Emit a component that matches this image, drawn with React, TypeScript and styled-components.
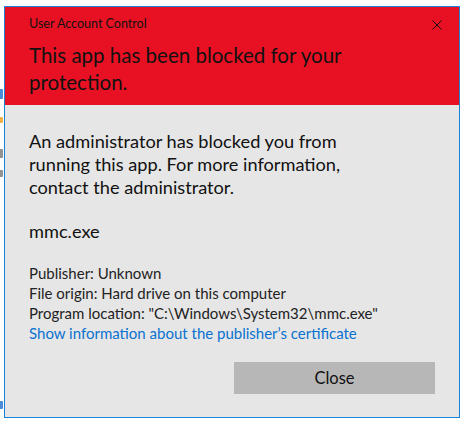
import styled, { createGlobalStyle } from 'styled-components';

const GlobalStyle = createGlobalStyle`
  html, body {
    margin: 0;
    padding: 0;
    background: #ffffff;
  }
  body {
    font-family: Lato, "Noto Sans", "Liberation Sans", sans-serif;
  }
`;

const Page = styled.div`
  display: flex;
  width: 464px;
  height: 426px;
  padding-top: 6px;
  box-sizing: border-box;
  overflow: hidden;
`;

// slivers of the window that sits behind the dialog
const Gutter = styled.div`
  width: 4px;
  flex-shrink: 0;
  display: flex;
  flex-direction: column;
`;

const Sliver = styled.div<{ $top: number; $color: string; $h: number }>`
  margin-top: ${p => p.$top}px;
  width: 3px;
  height: ${p => p.$h}px;
  background: ${p => p.$color};
  border-radius: 0 1px 1px 0;
  opacity: 0.8;
`;

const Dialog = styled.div`
  width: 456px;
  height: 412px;
  box-sizing: border-box;
  border: 1px solid #1883d7;
  background: #e6e6e6;
  display: flex;
  flex-direction: column;
`;

const Header = styled.div`
  background: #e81123;
  height: 98px;
  box-sizing: border-box;
  padding: 9px 24px 0 24px;
  color: #111111;
`;

const TopRow = styled.div`
  display: flex;
  justify-content: space-between;
  align-items: center;
`;

const Caption = styled.div`
  font-size: 12.5px;
  line-height: 16px;
`;

const CloseX = styled.svg`
  width: 10px;
  height: 10px;
  margin-right: -7px;
  margin-top: 2px;
`;

const Title = styled.div`
  margin-top: 10px;
  font-size: 20.5px;
  line-height: 27px;
`;

const Body = styled.div`
  flex: 1;
  display: flex;
  flex-direction: column;
  padding: 25px 24px 0 24px;
  color: #111111;
`;

const Message = styled.div`
  font-size: 18.2px;
  line-height: 23px;
`;

const FileName = styled.div`
  margin-top: 21px;
  font-size: 18.2px;
  line-height: 23px;
`;

const Details = styled.div`
  margin-top: 20px;
  font-size: 15px;
  line-height: 20px;
  color: #222222;
`;

const Link = styled.a`
  display: block;
  color: #0a72d1;
  text-decoration: none;
  cursor: pointer;
`;

const Footer = styled.div`
  display: flex;
  justify-content: flex-end;
  margin-top: 19px;
`;

const Button = styled.button`
  width: 201px;
  height: 32px;
  border: none;
  background: #b7b7b7;
  color: #111111;
  font-family: inherit;
  font-size: 16.5px;
  cursor: pointer;
`;

export default function App() {
  return (
    <>
      <GlobalStyle />
      <Page>
        <Gutter>
          <Sliver $top={83} $color="#1b6fd0" $h={10} />
          <Sliver $top={18} $color="#f59c1a" $h={6} />
          <Sliver $top={26} $color="#777777" $h={9} />
          <Sliver $top={12} $color="#777777" $h={7} />
          <Sliver $top={224} $color="#1b6fd0" $h={8} />
        </Gutter>
        <Dialog>
          <Header>
            <TopRow>
              <Caption>User Account Control</Caption>
              <CloseX viewBox="0 0 10 10">
                <path d="M0.5 0.5 L9.5 9.5 M9.5 0.5 L0.5 9.5" stroke="#111" strokeWidth="1" fill="none" />
              </CloseX>
            </TopRow>
            <Title>
              This app has been blocked for your
              <br />
              protection.
            </Title>
          </Header>
          <Body>
            <Message>
              An administrator has blocked you from
              <br />
              running this app. For more information,
              <br />
              contact the administrator.
            </Message>
            <FileName>mmc.exe</FileName>
            <Details>
              <div>Publisher: Unknown</div>
              <div>File origin: Hard drive on this computer</div>
              <div>Program location: "C:\Windows\System32\mmc.exe"</div>
              <Link>Show information about the publisher’s certificate</Link>
            </Details>
            <Footer>
              <Button>Close</Button>
            </Footer>
          </Body>
        </Dialog>
      </Page>
    </>
  );
}
